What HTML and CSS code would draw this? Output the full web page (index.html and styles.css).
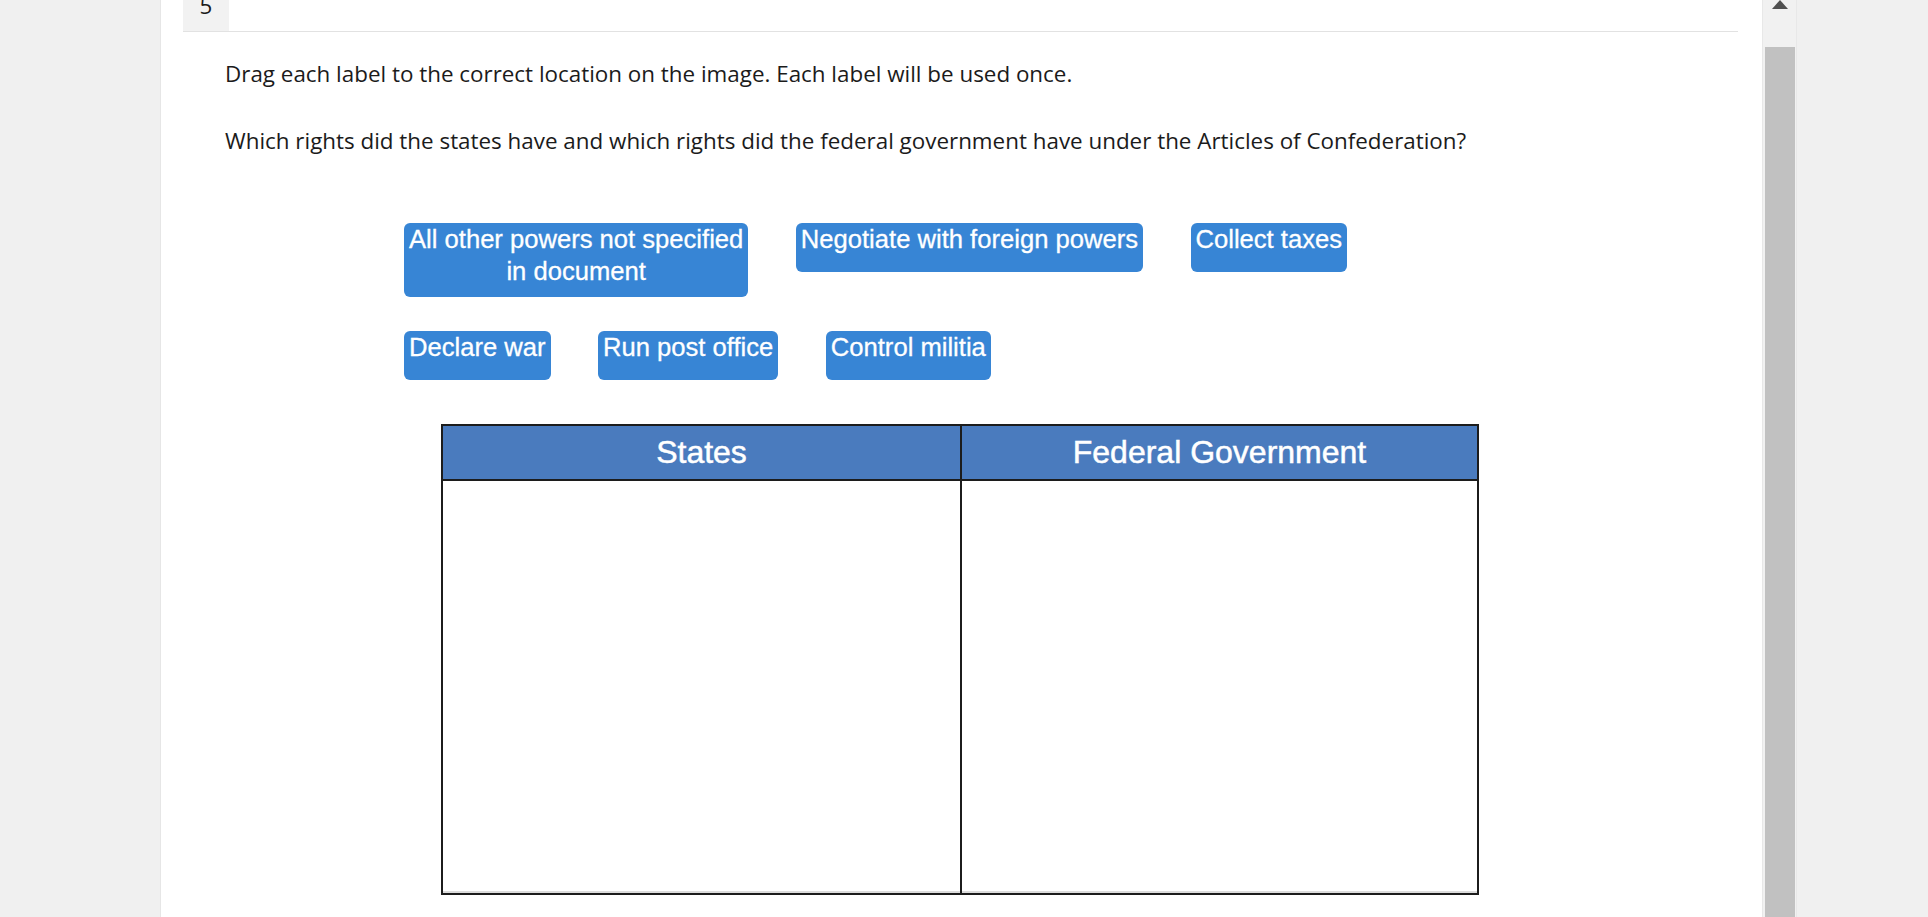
FILE: index.html
```html
<!DOCTYPE html>
<html lang="en">
<head>
  <meta charset="UTF-8">
  <meta name="viewport" content="width=device-width, initial-scale=1.0">
  <title>Question 5</title>
  <link rel="stylesheet" href="styles.css">
</head>
<body>
  <div class="page">
    <div class="card">
      <div class="card-inner">
        <div class="qnav">
          <div class="qnum">5</div>
        </div>

        <div class="question">
          <p class="prompt">Drag each label to the correct location on the image. Each label will be used once.</p>
          <p class="prompt second">Which rights did the states have and which rights did the federal government have under the Articles of Confederation?</p>
        </div>

        <div class="labels">
          <div class="label-row">
            <div class="drag-label">All other powers not specified<br>in document</div>
            <div class="drag-label">Negotiate with foreign powers</div>
            <div class="drag-label">Collect taxes</div>
          </div>
          <div class="label-row">
            <div class="drag-label">Declare war</div>
            <div class="drag-label">Run post office</div>
            <div class="drag-label">Control militia</div>
          </div>
        </div>

        <div class="drop-table">
          <div class="head">States</div>
          <div class="head">Federal Government</div>
          <div class="cell"></div>
          <div class="cell"></div>
        </div>
      </div>
    </div>

    <div class="scrollbar">
      <div class="scroll-up">
        <svg width="16" height="9" viewBox="0 0 16 9"><polygon points="0,9 8,0 16,9" fill="#505050"/></svg>
      </div>
      <div class="scroll-thumb"></div>
    </div>
  </div>
</body>
</html>
```

FILE: styles.css
```css
html, body {
  margin: 0;
  height: 917px;
  overflow: hidden;
}
body {
  background-color: #f0f0f0;
  color: #1b1b1b;
  font-family: "Open Sans", "Liberation Sans", sans-serif;
}
.page {
  display: flex;
  padding-left: 160px;
  height: 917px;
}
.card {
  width: 1602px;
  height: 917px;
  background-color: #ffffff;
  border-left: 1px solid #e6e6e6;
  box-sizing: border-box;
  padding: 0 24px 0 22px;
  overflow: hidden;
}
.card-inner {
  margin-top: -19px;
}
.qnav {
  display: flex;
  border-bottom: 1px solid #e2e2e2;
}
.qnum {
  width: 46px;
  height: 50px;
  box-sizing: border-box;
  padding-top: 8px;
  background-color: #f2f2f2;
  text-align: center;
  font-size: 22.4px;
  line-height: 33.75px;
}
.question {
  padding-left: 42px;
}
.prompt {
  margin: 25px 0 0;
  font-size: 22.4px;
  line-height: 33.75px;
}
.prompt.second {
  margin-top: 33px;
}
.labels {
  margin: 65px 0 0 221px;
  display: flex;
  flex-direction: column;
  gap: 34px;
}
.label-row {
  display: flex;
  align-items: flex-start;
  gap: 47.5px;
}
.drag-label {
  min-height: 49px;
  box-sizing: border-box;
  padding: 0 5px 10px;
  background-color: #3785d5;
  color: #ffffff;
  border-radius: 6px;
  font-family: "Liberation Sans", Arial, sans-serif;
  font-size: 25.6px;
  line-height: 32px;
  text-align: center;
  white-space: nowrap;
  -webkit-text-stroke: 0.3px #ffffff;
}
.drop-table {
  margin: 44px 0 0 258px;
  width: 1038px;
  height: 471px;
  box-sizing: border-box;
  border: 2px solid #1c1c1c;
  display: grid;
  grid-template-columns: 519px 1fr;
  grid-template-rows: 55px 1fr;
}
.head {
  background-color: #4a7bbe;
  color: #ffffff;
  border-bottom: 2px solid #1c1c1c;
  font-family: "Liberation Sans", Arial, sans-serif;
  font-size: 32px;
  line-height: 53px;
  text-align: center;
  -webkit-text-stroke: 0.5px #ffffff;
}
.head:first-child,
.cell:nth-child(3) {
  border-right: 2px solid #1c1c1c;
}
.cell {
  background-color: #ffffff;
  box-shadow: inset 0 -2px 0 #dcdcdc;
}
.scrollbar {
  width: 35px;
  height: 917px;
  background-color: #f1f1f1;
  border-left: 1px solid #e8e8e8;
  border-right: 1px solid #e8e8e8;
  box-sizing: border-box;
  display: flex;
  flex-direction: column;
  align-items: center;
}
.scroll-up {
  height: 47px;
  line-height: 0;
}
.scroll-thumb {
  width: 30px;
  flex: 1;
  background-color: #c1c1c1;
}
```
